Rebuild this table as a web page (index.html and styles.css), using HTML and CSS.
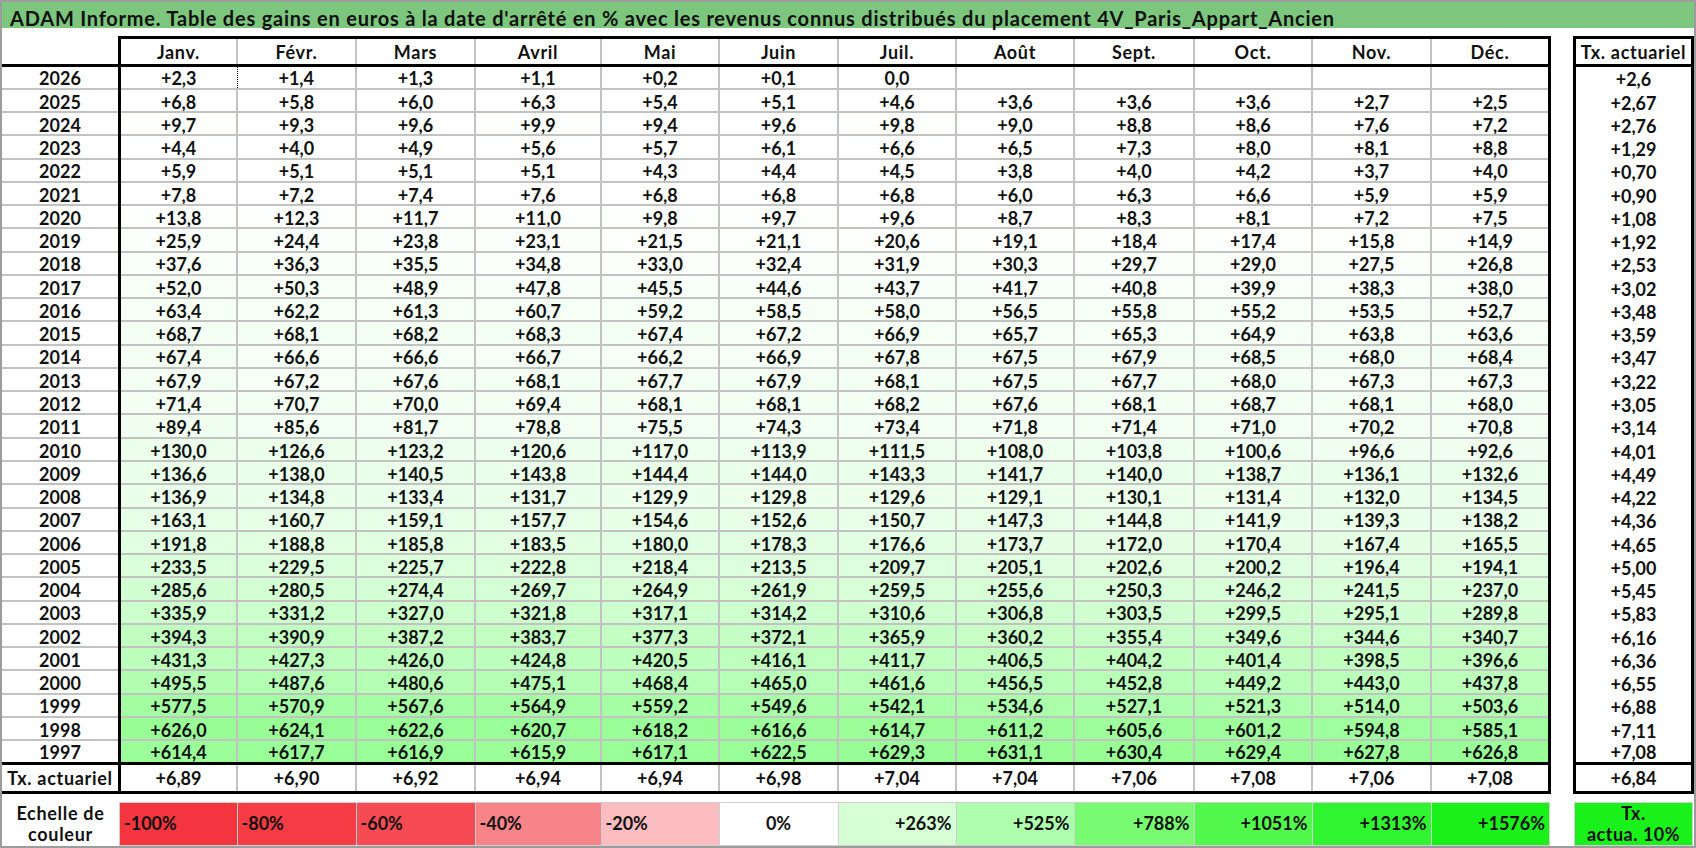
FILE: index.html
```html
<!DOCTYPE html>
<html lang="fr">
<head>
<meta charset="utf-8">
<title>ADAM Informe</title>
<link rel="stylesheet" href="styles.css">
</head>
<body>
<div class="frame">
<div class="title">ADAM Informe. Table des gains en euros à la date d'arrêté en % avec les revenus connus distribués du placement 4V_Paris_Appart_Ancien</div>
<table class="grid">
<colgroup>
<col class="cy"><col class="c1"><col class="c2"><col class="c3"><col class="c4"><col class="c5"><col class="c6"><col class="c7"><col class="c8"><col class="c9"><col class="c10"><col class="c11"><col class="c12"><col class="csp"><col class="ct">
</colgroup>
<tr class="r h"><th class="c"></th><th class="j">Janv.</th><th>Févr.</th><th>Mars</th><th>Avril</th><th>Mai</th><th>Juin</th><th>Juil.</th><th>Août</th><th>Sept.</th><th>Oct.</th><th>Nov.</th><th>Déc.</th><th class="sp"></th><th class="t">Tx. actuariel</th></tr>
<tr class="r d first"><td class="y">2026</td><td class="dl">+2,3</td><td class="dr">+1,4</td><td>+1,3</td><td>+1,1</td><td>+0,2</td><td>+0,1</td><td>0,0</td><td></td><td></td><td></td><td></td><td></td><td class="sp"></td><td class="t">+2,6</td></tr>
<tr class="r d"><td class="y">2025</td><td>+6,8</td><td>+5,8</td><td>+6,0</td><td>+6,3</td><td>+5,4</td><td>+5,1</td><td>+4,6</td><td>+3,6</td><td>+3,6</td><td>+3,6</td><td>+2,7</td><td>+2,5</td><td class="sp"></td><td class="t">+2,67</td></tr>
<tr class="r d"><td class="y">2024</td><td>+9,7</td><td>+9,3</td><td>+9,6</td><td>+9,9</td><td>+9,4</td><td>+9,6</td><td>+9,8</td><td>+9,0</td><td>+8,8</td><td>+8,6</td><td>+7,6</td><td>+7,2</td><td class="sp"></td><td class="t">+2,76</td></tr>
<tr class="r d"><td class="y">2023</td><td>+4,4</td><td>+4,0</td><td>+4,9</td><td>+5,6</td><td>+5,7</td><td>+6,1</td><td>+6,6</td><td>+6,5</td><td>+7,3</td><td>+8,0</td><td>+8,1</td><td>+8,8</td><td class="sp"></td><td class="t">+1,29</td></tr>
<tr class="r d"><td class="y">2022</td><td>+5,9</td><td>+5,1</td><td>+5,1</td><td>+5,1</td><td>+4,3</td><td>+4,4</td><td>+4,5</td><td>+3,8</td><td>+4,0</td><td>+4,2</td><td>+3,7</td><td>+4,0</td><td class="sp"></td><td class="t">+0,70</td></tr>
<tr class="r d"><td class="y">2021</td><td>+7,8</td><td>+7,2</td><td>+7,4</td><td>+7,6</td><td>+6,8</td><td>+6,8</td><td>+6,8</td><td>+6,0</td><td>+6,3</td><td>+6,6</td><td>+5,9</td><td>+5,9</td><td class="sp"></td><td class="t">+0,90</td></tr>
<tr class="r d"><td class="y">2020</td><td>+13,8</td><td>+12,3</td><td>+11,7</td><td>+11,0</td><td>+9,8</td><td>+9,7</td><td>+9,6</td><td>+8,7</td><td>+8,3</td><td>+8,1</td><td>+7,2</td><td>+7,5</td><td class="sp"></td><td class="t">+1,08</td></tr>
<tr class="r d"><td class="y">2019</td><td>+25,9</td><td>+24,4</td><td>+23,8</td><td>+23,1</td><td>+21,5</td><td>+21,1</td><td>+20,6</td><td>+19,1</td><td>+18,4</td><td>+17,4</td><td>+15,8</td><td>+14,9</td><td class="sp"></td><td class="t">+1,92</td></tr>
<tr class="r d"><td class="y">2018</td><td>+37,6</td><td>+36,3</td><td>+35,5</td><td>+34,8</td><td>+33,0</td><td>+32,4</td><td>+31,9</td><td>+30,3</td><td>+29,7</td><td>+29,0</td><td>+27,5</td><td>+26,8</td><td class="sp"></td><td class="t">+2,53</td></tr>
<tr class="r d"><td class="y">2017</td><td>+52,0</td><td>+50,3</td><td>+48,9</td><td>+47,8</td><td>+45,5</td><td>+44,6</td><td>+43,7</td><td>+41,7</td><td>+40,8</td><td>+39,9</td><td>+38,3</td><td>+38,0</td><td class="sp"></td><td class="t">+3,02</td></tr>
<tr class="r d"><td class="y">2016</td><td>+63,4</td><td>+62,2</td><td>+61,3</td><td>+60,7</td><td>+59,2</td><td>+58,5</td><td>+58,0</td><td>+56,5</td><td>+55,8</td><td>+55,2</td><td>+53,5</td><td>+52,7</td><td class="sp"></td><td class="t">+3,48</td></tr>
<tr class="r d"><td class="y">2015</td><td>+68,7</td><td>+68,1</td><td>+68,2</td><td>+68,3</td><td>+67,4</td><td>+67,2</td><td>+66,9</td><td>+65,7</td><td>+65,3</td><td>+64,9</td><td>+63,8</td><td>+63,6</td><td class="sp"></td><td class="t">+3,59</td></tr>
<tr class="r d"><td class="y">2014</td><td>+67,4</td><td>+66,6</td><td>+66,6</td><td>+66,7</td><td>+66,2</td><td>+66,9</td><td>+67,8</td><td>+67,5</td><td>+67,9</td><td>+68,5</td><td>+68,0</td><td>+68,4</td><td class="sp"></td><td class="t">+3,47</td></tr>
<tr class="r d"><td class="y">2013</td><td>+67,9</td><td>+67,2</td><td>+67,6</td><td>+68,1</td><td>+67,7</td><td>+67,9</td><td>+68,1</td><td>+67,5</td><td>+67,7</td><td>+68,0</td><td>+67,3</td><td>+67,3</td><td class="sp"></td><td class="t">+3,22</td></tr>
<tr class="r d"><td class="y">2012</td><td>+71,4</td><td>+70,7</td><td>+70,0</td><td>+69,4</td><td>+68,1</td><td>+68,1</td><td>+68,2</td><td>+67,6</td><td>+68,1</td><td>+68,7</td><td>+68,1</td><td>+68,0</td><td class="sp"></td><td class="t">+3,05</td></tr>
<tr class="r d"><td class="y">2011</td><td>+89,4</td><td>+85,6</td><td>+81,7</td><td>+78,8</td><td>+75,5</td><td>+74,3</td><td>+73,4</td><td>+71,8</td><td>+71,4</td><td>+71,0</td><td>+70,2</td><td>+70,8</td><td class="sp"></td><td class="t">+3,14</td></tr>
<tr class="r d"><td class="y">2010</td><td>+130,0</td><td>+126,6</td><td>+123,2</td><td>+120,6</td><td>+117,0</td><td>+113,9</td><td>+111,5</td><td>+108,0</td><td>+103,8</td><td>+100,6</td><td>+96,6</td><td>+92,6</td><td class="sp"></td><td class="t">+4,01</td></tr>
<tr class="r d"><td class="y">2009</td><td>+136,6</td><td>+138,0</td><td>+140,5</td><td>+143,8</td><td>+144,4</td><td>+144,0</td><td>+143,3</td><td>+141,7</td><td>+140,0</td><td>+138,7</td><td>+136,1</td><td>+132,6</td><td class="sp"></td><td class="t">+4,49</td></tr>
<tr class="r d"><td class="y">2008</td><td>+136,9</td><td>+134,8</td><td>+133,4</td><td>+131,7</td><td>+129,9</td><td>+129,8</td><td>+129,6</td><td>+129,1</td><td>+130,1</td><td>+131,4</td><td>+132,0</td><td>+134,5</td><td class="sp"></td><td class="t">+4,22</td></tr>
<tr class="r d"><td class="y">2007</td><td>+163,1</td><td>+160,7</td><td>+159,1</td><td>+157,7</td><td>+154,6</td><td>+152,6</td><td>+150,7</td><td>+147,3</td><td>+144,8</td><td>+141,9</td><td>+139,3</td><td>+138,2</td><td class="sp"></td><td class="t">+4,36</td></tr>
<tr class="r d"><td class="y">2006</td><td>+191,8</td><td>+188,8</td><td>+185,8</td><td>+183,5</td><td>+180,0</td><td>+178,3</td><td>+176,6</td><td>+173,7</td><td>+172,0</td><td>+170,4</td><td>+167,4</td><td>+165,5</td><td class="sp"></td><td class="t">+4,65</td></tr>
<tr class="r d"><td class="y">2005</td><td>+233,5</td><td>+229,5</td><td>+225,7</td><td>+222,8</td><td>+218,4</td><td>+213,5</td><td>+209,7</td><td>+205,1</td><td>+202,6</td><td>+200,2</td><td>+196,4</td><td>+194,1</td><td class="sp"></td><td class="t">+5,00</td></tr>
<tr class="r d"><td class="y">2004</td><td>+285,6</td><td>+280,5</td><td>+274,4</td><td>+269,7</td><td>+264,9</td><td>+261,9</td><td>+259,5</td><td>+255,6</td><td>+250,3</td><td>+246,2</td><td>+241,5</td><td>+237,0</td><td class="sp"></td><td class="t">+5,45</td></tr>
<tr class="r d"><td class="y">2003</td><td>+335,9</td><td>+331,2</td><td>+327,0</td><td>+321,8</td><td>+317,1</td><td>+314,2</td><td>+310,6</td><td>+306,8</td><td>+303,5</td><td>+299,5</td><td>+295,1</td><td>+289,8</td><td class="sp"></td><td class="t">+5,83</td></tr>
<tr class="r d"><td class="y">2002</td><td>+394,3</td><td>+390,9</td><td>+387,2</td><td>+383,7</td><td>+377,3</td><td>+372,1</td><td>+365,9</td><td>+360,2</td><td>+355,4</td><td>+349,6</td><td>+344,6</td><td>+340,7</td><td class="sp"></td><td class="t">+6,16</td></tr>
<tr class="r d"><td class="y">2001</td><td>+431,3</td><td>+427,3</td><td>+426,0</td><td>+424,8</td><td>+420,5</td><td>+416,1</td><td>+411,7</td><td>+406,5</td><td>+404,2</td><td>+401,4</td><td>+398,5</td><td>+396,6</td><td class="sp"></td><td class="t">+6,36</td></tr>
<tr class="r d"><td class="y">2000</td><td>+495,5</td><td>+487,6</td><td>+480,6</td><td>+475,1</td><td>+468,4</td><td>+465,0</td><td>+461,6</td><td>+456,5</td><td>+452,8</td><td>+449,2</td><td>+443,0</td><td>+437,8</td><td class="sp"></td><td class="t">+6,55</td></tr>
<tr class="r d"><td class="y">1999</td><td>+577,5</td><td>+570,9</td><td>+567,6</td><td>+564,9</td><td>+559,2</td><td>+549,6</td><td>+542,1</td><td>+534,6</td><td>+527,1</td><td>+521,3</td><td>+514,0</td><td>+503,6</td><td class="sp"></td><td class="t">+6,88</td></tr>
<tr class="r d"><td class="y">1998</td><td>+626,0</td><td>+624,1</td><td>+622,6</td><td>+620,7</td><td>+618,2</td><td>+616,6</td><td>+614,7</td><td>+611,2</td><td>+605,6</td><td>+601,2</td><td>+594,8</td><td>+585,1</td><td class="sp"></td><td class="t">+7,11</td></tr>
<tr class="r d last"><td class="y">1997</td><td>+614,4</td><td>+617,7</td><td>+616,9</td><td>+615,9</td><td>+617,1</td><td>+622,5</td><td>+629,3</td><td>+631,1</td><td>+630,4</td><td>+629,4</td><td>+627,8</td><td>+626,8</td><td class="sp"></td><td class="t">+7,08</td></tr>
<tr class="r tx"><td class="y lbl">Tx. actuariel</td><td>+6,89</td><td>+6,90</td><td>+6,92</td><td>+6,94</td><td>+6,94</td><td>+6,98</td><td>+7,04</td><td>+7,04</td><td>+7,06</td><td>+7,08</td><td>+7,06</td><td>+7,08</td><td class="sp"></td><td class="t">+6,84</td></tr>
<tr class="gap"><td class="sp" colspan="15"></td></tr>
<tr class="sc"><td class="lab">Echelle de<br>couleur</td><td class="s neg n100">-100%</td><td class="s neg n80">-80%</td><td class="s neg n60">-60%</td><td class="s neg n40">-40%</td><td class="s neg n20">-20%</td><td class="s zero">0%</td><td class="s pos p1">+263%</td><td class="s pos p2">+525%</td><td class="s pos p3">+788%</td><td class="s pos p4">+1051%</td><td class="s pos p5">+1313%</td><td class="s pos p6">+1576%</td><td class="sp"></td><td class="s ta">Tx.<br>actua. 10%</td></tr>
</table>
</div>
<script src="script.js"></script>
</body>
</html>
```

FILE: styles.css
```css
html, body {
  margin: 0;
  padding: 0;
  background: #fff;
}

.frame {
  width: 1696px;
  height: 848px;
  box-sizing: border-box;
  border: 2px solid #9c9c9c;
  overflow: hidden;
  background: #fff;
}

.title {
  height: 23px;
  padding: 3px 0 0 8px;
  background: #7dc67d;
  font: 700 20px "Lato", "Liberation Sans", sans-serif;
  letter-spacing: 0.78px;
  line-height: 26px;
  color: #111;
  white-space: nowrap;
}

.grid {
  border-collapse: collapse;
  table-layout: fixed;
  width: 1692px;
  margin-top: 8px;
}

.cy { width: 117.5px; }
.c1 { width: 117.5px; }
.c2 { width: 119px; }
.c3 { width: 119px; }
.c4 { width: 126px; }
.c5 { width: 118px; }
.c6 { width: 119px; }
.c7 { width: 118px; }
.c8 { width: 118px; }
.c9 { width: 120px; }
.c10 { width: 118px; }
.c11 { width: 119px; }
.c12 { width: 118.5px; }
.csp { width: 25px; }
.ct { width: 118px; }

.grid td,
.grid th {
  padding: 0 0 0.5px;
  border: 2px solid #c2c2c2;
  font: 700 18px "Lato", "Liberation Sans", sans-serif;
  line-height: 18px;
  color: #111;
  text-align: center;
  vertical-align: bottom;
  white-space: nowrap;
  overflow: hidden;
}

.grid tr.h { height: 28px; }
.grid tr.d { height: 23.267px; }
.grid tr.tx { height: 29px; }
.grid tr.gap { height: 10px; }
.grid tr.sc { height: 43px; }

.grid th {
  padding-bottom: 3px;
  letter-spacing: 0.7px;
  border-top: 3px solid #000;
  border-bottom: 3px solid #000;
}
.grid th.c { border: none; }
.grid th.j { border-left: 3px solid #000; }

.grid .y {
  border-left: none;
  border-right: 3px solid #000;
}
.grid .lbl { letter-spacing: 0.7px; }

.grid tr.tx td { padding-bottom: 4px; }

.grid tr.first td:not(.sp) { border-top: 3px solid #000; }
.grid tr.last td:not(.sp),
.grid tr.tx td:not(.sp) { border-bottom: 3px solid #000; }

.grid .r > :nth-child(13) { border-right: 3px solid #000; }

.grid .sp { border: none; }

.grid .t {
  border-top: none;
  border-bottom: none;
  border-left: 3px solid #000;
  border-right: 3px solid #000;
}
.grid th.t { border: 3px solid #000; }
.grid tr.first td.t { border-top: 3px solid #000; }
.grid tr.last td.t,
.grid tr.tx td.t { border-bottom: 3px solid #000; }

.grid td.dl { border-right: 1px dotted #000; }
.grid td.dr { border-left: 1px dotted #000; }

.grid tr.gap td { padding: 0; }

.grid .lab {
  border: none;
  padding: 0;
  line-height: 21px;
  letter-spacing: 0.7px;
  vertical-align: middle;
}
.grid .s {
  border: 1px solid #cfcfcf;
  padding: 0;
  line-height: 21px;
  vertical-align: middle;
}
.grid .neg { text-align: left; padding-left: 4px; }
.grid .pos { text-align: right; padding-right: 4px; }
.grid .zero { text-align: center; }

.n100 { background: #f4353f; }
.n80 { background: #f53b43; }
.n60 { background: #f64b52; }
.n40 { background: #f88388; }
.n20 { background: #fbbdc0; }
.zero { background: #fff; }
.p1 { background: #d6ffd6; }
.p2 { background: #adffad; }
.p3 { background: #78fb72; }
.p4 { background: #52f84b; }
.p5 { background: #2ff42f; }
.p6 { background: #1af01a; }
.grid .ta {
  background: #1af01a;
  text-align: center;
  letter-spacing: 0.5px;
}
```

FILE: script.js
```js
(function () {
  var stops = [
    [0, [255, 255, 255]],
    [263, [214, 255, 214]],
    [525, [173, 255, 173]],
    [788, [120, 251, 114]],
    [1051, [82, 248, 75]],
    [1313, [47, 244, 47]],
    [1576, [26, 240, 26]]
  ];
  function colour(v) {
    for (var i = 1; i < stops.length; i++) {
      if (v <= stops[i][0]) {
        var a = stops[i - 1], b = stops[i];
        var t = (v - a[0]) / (b[0] - a[0]);
        var c = a[1].map(function (x, k) { return Math.round(x + (b[1][k] - x) * t); });
        return 'rgb(' + c.join(',') + ')';
      }
    }
    return 'rgb(26,240,26)';
  }
  var cells = document.querySelectorAll('tr.d td:not(.y):not(.sp):not(.t)');
  cells.forEach(function (td) {
    var s = td.textContent.trim();
    if (!s) return;
    var v = parseFloat(s.replace(',', '.'));
    if (!isNaN(v) && v >= 0) td.style.backgroundColor = colour(v);
  });
})();
```
